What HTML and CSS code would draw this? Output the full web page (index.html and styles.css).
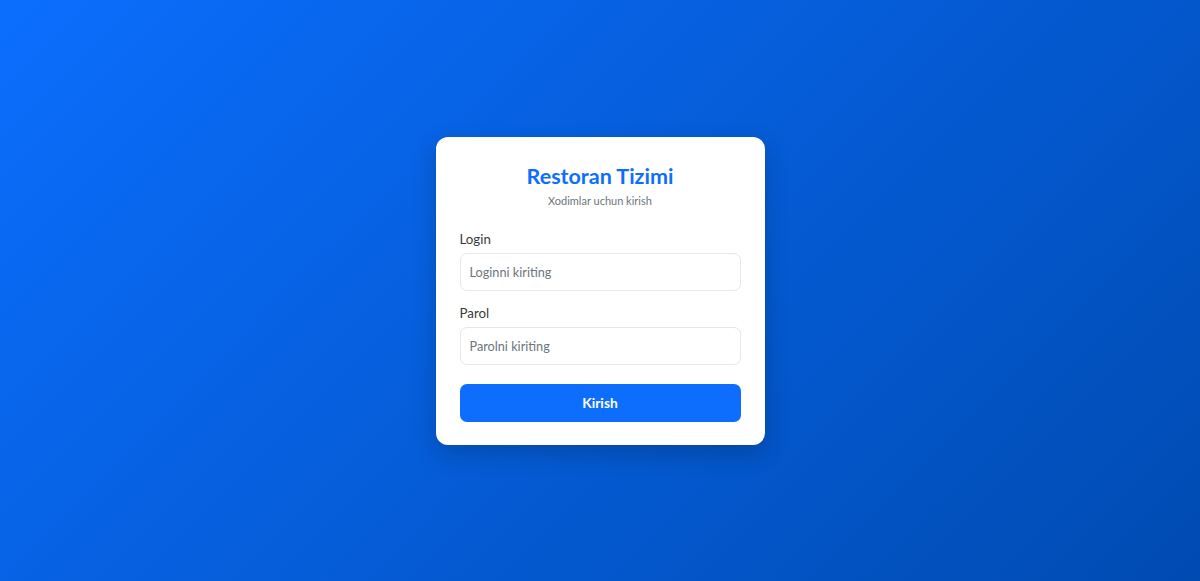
FILE: index.html
```html
<!DOCTYPE html>
<html lang="uz">
<head>
<meta charset="utf-8">
<title>Restoran Tizimi</title>
<link rel="stylesheet" href="styles.css">
</head>
<body>
<main class="page">
  <div class="card">
    <div class="head">
      <h1 class="title">Restoran Tizimi</h1>
      <p class="subtitle">Xodimlar uchun kirish</p>
    </div>
    <form class="form">
      <div class="field">
        <label class="label" for="login">Login</label>
        <input class="input" id="login" type="text" placeholder="Loginni kiriting">
      </div>
      <div class="field">
        <label class="label" for="parol">Parol</label>
        <input class="input" id="parol" type="password" placeholder="Parolni kiriting">
      </div>
      <button class="btn" type="button">Kirish</button>
    </form>
  </div>
</main>
</body>
</html>
```

FILE: styles.css
```css
* { box-sizing: border-box; }
html, body { margin: 0; height: 100%; }
body {
  font-family: Lato, "Noto Sans", sans-serif;
  background: linear-gradient(135deg, #0b6efd 0%, #004bb2 100%);
  color: #333;
}
.page {
  min-height: 100vh;
  display: flex;
  align-items: center;
  justify-content: center;
}
.card {
  width: 329px;
  background: #fff;
  border-radius: 12px;
  padding: 24px 24px 23px;
  box-shadow: 0 8px 24px rgba(0, 0, 0, 0.2);
}
.head { text-align: center; margin-bottom: 21px; }
.title {
  margin: 0;
  font-size: 21.5px;
  line-height: 30px;
  font-weight: 700;
  color: #0d6efd;
}
.subtitle {
  margin: 2px 0 0;
  font-size: 11px;
  line-height: 16px;
  color: #6c757d;
}
.form { display: flex; flex-direction: column; }
.field { display: flex; flex-direction: column; margin-bottom: 13.5px; }
.label {
  font-size: 13.3px;
  line-height: 18px;
  margin-bottom: 5px;
  color: #3a3a3a;
}
.input {
  height: 38px;
  border: 1px solid #e3e6ea;
  border-radius: 7px;
  padding: 0 9px;
  font-family: inherit;
  font-size: 12.7px;
  color: #333;
  background: #fff;
  outline: none;
}
.input::placeholder { color: #6c757d; }
.btn {
  margin-top: 5px;
  height: 38px;
  border: none;
  border-radius: 7px;
  background: #0d6efd;
  color: #fff;
  font-family: inherit;
  font-size: 13.8px;
  font-weight: 700;
  cursor: pointer;
}
```
